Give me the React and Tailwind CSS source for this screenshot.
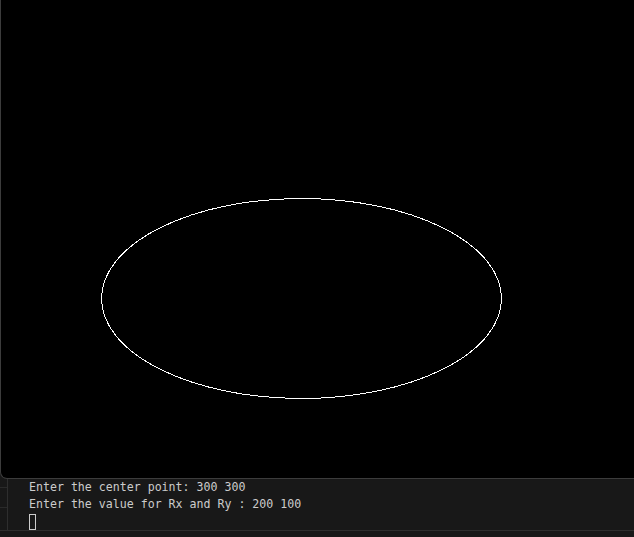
export default function App() {
  return (
    <div className="w-[634px] h-[537px] bg-[#181818] flex flex-col overflow-hidden">
      <div className="h-[479px] bg-black border-l border-b border-[#3c3c3c] rounded-bl-[7px] relative shrink-0">
        <svg className="absolute left-0 top-0" width="633" height="478" viewBox="0 0 633 478">
          <ellipse cx="300.5" cy="298.5" rx="200" ry="100" fill="none" stroke="#ffffff" strokeWidth="1" shapeRendering="crispEdges" />
        </svg>
      </div>
      <div className="flex h-[52px] border-b border-[#2e2e2e] shrink-0">
        <div className="w-[8px] border-r border-[#2e2e2e] flex flex-col">
          <div className="h-[9px] border-b border-[#2a2a2a]" />
          <div className="h-[20px] border-b border-[#2a2a2a]" />
        </div>
        <div className="pl-[21px] font-['DejaVu_Sans_Mono','Liberation_Mono',monospace] text-[11.6px] leading-[17px] text-[#cccccc]">
          <div className="whitespace-pre">Enter the center point: 300 300</div>
          <div className="whitespace-pre">Enter the value for Rx and Ry : 200 100</div>
          <div className="mt-[1px] w-[7px] h-[16px] border border-[#cccccc]" />
        </div>
      </div>
      <div className="flex-1 bg-[#181818]" />
    </div>
  );
}
